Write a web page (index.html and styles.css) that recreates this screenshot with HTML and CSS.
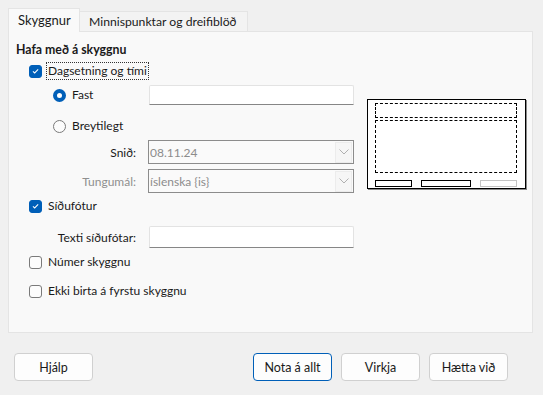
FILE: index.html
```html
<!DOCTYPE html>
<html lang="is">
<head>
<meta charset="utf-8">
<link rel="stylesheet" href="styles.css">
</head>
<body>
<div class="dialog">
  <div class="tabs">
    <div class="tab active">Skyggnur</div>
    <div class="tab">Minnispunktar og dreifiblöð</div>
  </div>
  <div class="panel">
    <div class="form">
      <div class="row heading">Hafa með á skyggnu</div>
      <div class="row r-date">
        <span class="check on"><svg viewBox="0 0 12 12" width="12" height="12"><path d="M3.2 6.3 L5.1 8.1 L8.9 4.2" fill="none" stroke="#fff" stroke-width="1.1"/></svg></span>
        <span class="lbl focus">Dagsetning og tími</span>
      </div>
      <div class="row r-fast">
        <span class="radio on"></span>
        <span class="lbl rlbl">Fast</span>
        <span class="input"></span>
      </div>
      <div class="row r-var">
        <span class="radio"></span>
        <span class="lbl rlbl">Breytilegt</span>
      </div>
      <div class="row r-snid">
        <span class="flabel">Snið:</span>
        <span class="combo"><span class="ctext">08.11.24</span><span class="cbtn"><svg viewBox="0 0 10 6" width="10" height="6"><path d="M0.5 0.5 L5 5 L9.5 0.5" fill="none" stroke="#b0b0b0" stroke-width="1"/></svg></span></span>
      </div>
      <div class="row r-lang">
        <span class="flabel dis">Tungumál:</span>
        <span class="combo"><span class="ctext">íslenska {is}</span><span class="cbtn"><svg viewBox="0 0 10 6" width="10" height="6"><path d="M0.5 0.5 L5 5 L9.5 0.5" fill="none" stroke="#b0b0b0" stroke-width="1"/></svg></span></span>
      </div>
      <div class="row r-foot">
        <span class="check on"><svg viewBox="0 0 12 12" width="12" height="12"><path d="M3.2 6.3 L5.1 8.1 L8.9 4.2" fill="none" stroke="#fff" stroke-width="1.1"/></svg></span>
        <span class="lbl">Síðufótur</span>
      </div>
      <div class="row r-ftext">
        <span class="flabel">Texti síðufótar:</span>
        <span class="input wide"></span>
      </div>
      <div class="row r-num">
        <span class="check"></span>
        <span class="lbl">Númer skyggnu</span>
      </div>
      <div class="row r-first">
        <span class="check"></span>
        <span class="lbl">Ekki birta á fyrstu skyggnu</span>
      </div>
    </div>
    <div class="preview">
      <div class="pv-head"></div>
      <div class="pv-body"></div>
      <div class="pv-foot">
        <span class="bar b1"></span>
        <span class="bar b2"></span>
        <span class="bar b3"></span>
      </div>
    </div>
  </div>
  <div class="buttons">
    <button class="btn">Hjálp</button>
    <span class="spacer"></span>
    <button class="btn default">Nota á allt</button>
    <button class="btn">Virkja</button>
    <button class="btn">Hætta við</button>
  </div>
</div>
</body>
</html>
```
FILE: styles.css
```css
html, body {
  margin: 0;
  padding: 0;
  background: #f0f0f0;
}
body {
  width: 543px;
  height: 395px;
  overflow: hidden;
  font-family: Lato, "Noto Sans", sans-serif;
  font-size: 12px;
  color: #1a1a1a;
}
.dialog {
  padding: 8px 10px 0 8px;
}
.tabs {
  display: flex;
  align-items: flex-end;
  height: 23px;
}
.tab {
  height: 20px;
  line-height: 19px;
  box-sizing: border-box;
  border: 1px solid #e4e4e4;
  border-bottom: none;
  background: #f3f3f3;
  width: 169px;
  padding-left: 9px;
  margin-left: -1px;
  font-size: 12.2px;
}
.tab.active {
  height: 24px;
  line-height: 22px;
  width: 72px;
  margin-left: 0;
  background: #f9f9f9;
  position: relative;
  z-index: 1;
  margin-bottom: -1px;
  font-size: 13px;
}
.panel {
  box-sizing: border-box;
  width: 525px;
  height: 302px;
  background: #f9f9f9;
  border: 1px solid #e4e4e4;
  display: flex;
}
.form {
  flex: none;
  width: 339px;
  padding-left: 7px;
}
.row {
  display: flex;
  align-items: center;
  height: 18px;
}
.heading {
  font-weight: bold;
  margin-top: 8px;
  font-size: 12.3px;
}
.r-date { margin-top: 4px; padding-left: 13px; }
.r-fast { margin-top: 5px; height: 20px; padding-left: 37px; }
.r-var { margin-top: 12px; padding-left: 37px; }
.r-snid { margin-top: 5px; height: 24px; }
.r-lang { margin-top: 5px; height: 24px; }
.r-foot { margin-top: 4px; padding-left: 13px; }
.r-ftext { margin-top: 11px; height: 22px; }
.r-num { margin-top: 5px; padding-left: 13px; }
.r-first { margin-top: 11px; padding-left: 13px; }

.check {
  box-sizing: border-box;
  width: 13px;
  height: 13px;
  border: 1px solid #7a7a7a;
  border-radius: 3px;
  background: #fcfcfc;
  display: inline-flex;
  align-items: center;
  justify-content: center;
  flex: none;
}
.check.on {
  background: #005fb8;
  border-color: #005fb8;
}
.check svg { display: block; }
.lbl {
  margin-left: 4px;
  padding: 0 1px;
  line-height: 16px;
  border: 1px solid transparent;
  font-size: 12px;
}
.lbl.focus {
  border: 1px dotted #333;
}
.radio {
  box-sizing: border-box;
  width: 13px;
  height: 13px;
  border-radius: 50%;
  border: 1px solid #7a7a7a;
  background: #fcfcfc;
  flex: none;
}
.radio.on {
  border: 4px solid #005fb8;
  background: #fff;
}
.rlbl { width: 79px; flex: none; box-sizing: border-box; }
.input {
  box-sizing: border-box;
  width: 205px;
  height: 20px;
  background: #fff;
  border: 1px solid #e3e3e3;
  border-bottom: 1px solid #868686;
  border-radius: 2px 2px 0 0;
}
.input.wide { height: 22px; margin-left: 13px; }
.flabel {
  width: 120px;
  text-align: right;
  flex: none;
  font-size: 12px;
}
.flabel.dis { color: #8f8f8f; }
.combo {
  box-sizing: border-box;
  margin-left: 12px;
  width: 206px;
  height: 24px;
  border: 1px solid #8c8c8c;
  background: #fafafa;
  display: flex;
  align-items: center;
  justify-content: space-between;
  color: #8c8c8c;
  font-size: 12px;
}
.ctext { padding-left: 1px; }
.cbtn {
  box-sizing: border-box;
  width: 17px;
  height: 21px;
  margin-right: 1px;
  border: 1px solid #ececec;
  background: #f6f6f6;
  display: flex;
  align-items: center;
  justify-content: center;
}
.cbtn svg { display: block; }

.preview {
  box-sizing: border-box;
  margin-top: 67px;
  margin-left: 12px;
  width: 159px;
  height: 90px;
  border: 1.5px solid #000;
  background: #fff;
  box-shadow: 1px 1px 0 #8a8a8a;
  padding: 3px 8px 0 7px;
  display: flex;
  flex-direction: column;
}
.pv-head {
  height: 15px;
  border: 1px dashed #000;
  box-sizing: border-box;
}
.pv-body {
  margin-top: 2px;
  height: 53px;
  border: 1px dashed #000;
  box-sizing: border-box;
}
.pv-foot {
  margin-top: 7px;
  display: flex;
}
.bar {
  box-sizing: border-box;
  height: 7px;
  border: 1px solid #000;
}
.b1 { width: 37px; }
.b2 { width: 50px; margin-left: 9px; }
.b3 { width: 37px; margin-left: 9px; border-color: #c4c4c4; }

.buttons {
  display: flex;
  margin-top: 20px;
  padding-left: 6px;
  gap: 9px;
  width: 494px;
}
.spacer { flex: 1; }
.btn {
  box-sizing: border-box;
  width: 79px;
  height: 28px;
  border: 1px solid #d0d0d0;
  border-radius: 4px;
  background: #fdfdfd;
  font-family: inherit;
  font-size: 12.5px;
  color: #1a1a1a;
  padding: 0;
}
.btn.default {
  border-color: #005fb8;
}
```
